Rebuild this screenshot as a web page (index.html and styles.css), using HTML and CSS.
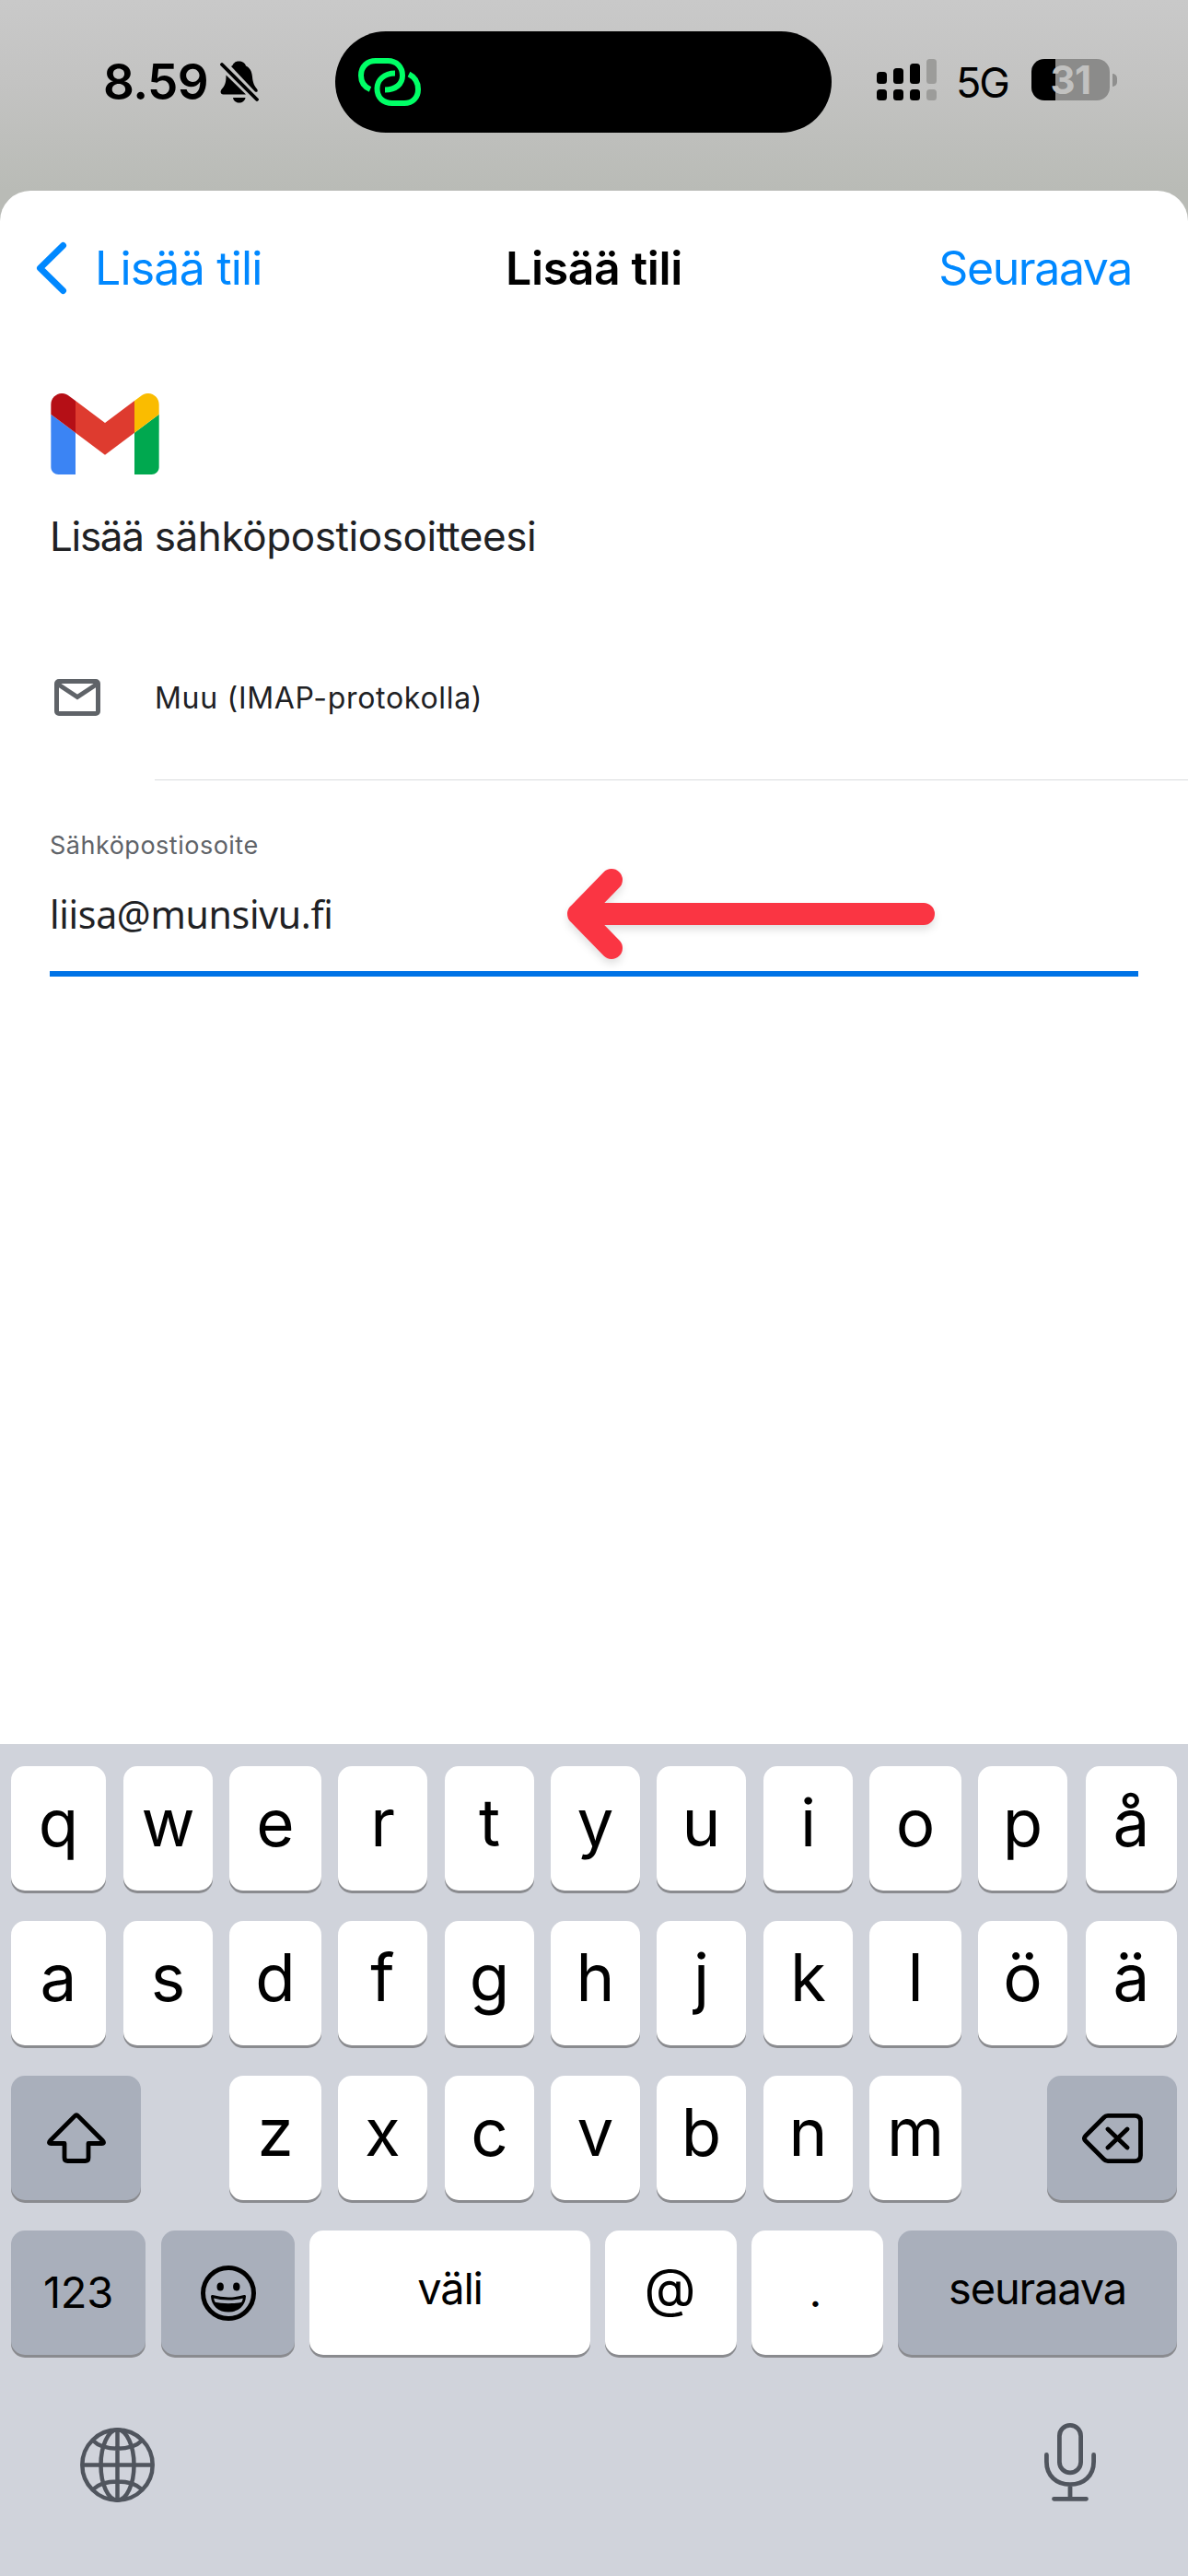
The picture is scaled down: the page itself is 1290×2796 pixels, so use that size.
FILE: index.html
```html
<!DOCTYPE html>
<html lang="fi">
<head>
<meta charset="utf-8">
<title>Lisää tili</title>
<link rel="stylesheet" href="styles.css">
</head>
<body>
<div class="screen">
  <header class="status">
    <div class="status-left">
      <span class="clock">8.59</span>
      <svg class="bell" viewBox="0 0 42 46" width="42" height="46">
        <path d="M20.500 0.500c-3.500 0-6 1.500-7 4.500l-1.500 1L38 33.500c2.500 1 3.500-.5 2-3-3-3.500-4.500-7-5-13C34.500 11 32 7.500 28 5.500 27 2 24 .5 20.500 .5z"/>
        <path d="M6.500 15.500c0 9-1.500 11.500-4.500 15-2.500 3-1.500 6 1.500 6h24.500z"/>
        <path d="M14 40h13.500c-.5 3.500-3.500 5.500-6.750 5.500S14.500 43.500 14 40z"/>
        <path d="M2 4 40 42" stroke="#000" stroke-width="3.800" stroke-linecap="round"/>
      </svg>
    </div>
    <div class="island">
      <svg class="link" viewBox="0 0 68 54" width="68" height="54" fill="none" stroke="#00ff66" stroke-width="6">
        <path d="M13 35C6 32 3 27 3 20 3 10 10 4 19 4H32C42 4 48 11 48 20 48 29 41 35.500 29 35.500"/>
        <path d="M40 17.500C28 17.500 20.500 25 20.500 34 20.500 44 27 50 37 50H50C59 50 65 44 65 35 65 27 61 21.500 55 18.500"/>
      </svg>
    </div>
    <div class="status-right">
      <svg class="signal" viewBox="0 0 65 45" width="65" height="45">
        <g><rect y="14" width="11" height="13" rx="3.500"/><rect x="18" y="10" width="11" height="17" rx="3.500"/><rect x="36" y="5" width="11" height="22" rx="3.500"/>
        <rect y="33" width="11" height="12" rx="3.500"/><rect x="18" y="33" width="11" height="12" rx="3.500"/><rect x="36" y="33" width="11" height="12" rx="3.500"/></g>
        <g fill="#9c9c9a"><rect x="54" width="11" height="27" rx="3.500"/><rect x="54" y="33" width="11" height="12" rx="3.500"/></g>
      </svg>
      <span class="network">5G</span>
      <div class="battery"><span>31</span></div>
      <i class="nub"></i>
    </div>
  </header>

  <main class="sheet">
    <nav class="nav">
      <a class="back">
        <svg viewBox="0 0 34 58" width="34" height="58" fill="none" stroke="#0088ff" stroke-width="7" stroke-linecap="round" stroke-linejoin="round"><path d="M29.500 4.500 4.500 29l25 24.500"/></svg>
        <span>Lisää tili</span>
      </a>
      <h1>Lisää tili</h1>
      <a class="next">Seuraava</a>
    </nav>
    <svg class="gmail" viewBox="52 42 88 66" width="118" height="88">
      <path fill="#3b84f4" d="M58 108h14V74L52 59v43c0 3.320 2.690 6 6 6"/>
      <path fill="#00a84f" d="M120 108h14c3.320 0 6-2.690 6-6V59l-20 15"/>
      <path fill="#fabc00" d="M120 48v26l20-15v-8c0-7.420-8.470-11.650-14.400-7.200"/>
      <path fill="#de3b2f" d="M72 74V48l24 18 24-18v26L96 92"/>
      <path fill="#b50f16" d="M52 51v8l20 15V48l-5.600-4.200c-5.940-4.450-14.400-.22-14.400 7.200"/>
    </svg>
    <h2><span class="tight">Lisää</span> sähköpostiosoi<span class="tie">t</span>teesi</h2>
    <div class="provider">
      <svg viewBox="0 0 50 40" width="50" height="40" fill="none" stroke="#5f6368" stroke-width="5"><rect x="2.500" y="2.500" width="45" height="35" rx="2.500"/><path d="M3 5l22 14.500L47 5"/></svg>
      <div class="provider-name">Muu (IMAP-protokolla)</div>
    </div>
    <div class="field">
      <label>Sähköpostiosoite</label>
      <div class="value">liisa@munsivu.fi</div>
      <svg class="arrow" viewBox="0 0 420 120" width="420" height="120" fill="none" stroke="#fa3543" stroke-width="24" stroke-linecap="round" stroke-linejoin="round"><path d="M58 23 22 60l36 37M22 60H397"/></svg>
    </div>
  </main>

  <section class="keyboard">
    <div class="row letters">
      <b>q</b><b>w</b><b>e</b><b>r</b><b>t</b><b>y</b><b>u</b><b>i</b><b>o</b><b>p</b><b>å</b>
    </div>
    <div class="row letters">
      <b>a</b><b>s</b><b>d</b><b>f</b><b>g</b><b>h</b><b>j</b><b>k</b><b>l</b><b>ö</b><b>ä</b>
    </div>
    <div class="row third">
      <b class="dark shift"><svg viewBox="0 0 64 55" width="64" height="55" fill="none" stroke="#000" stroke-width="4.800" stroke-linejoin="round"><path d="M30.300 3.600Q32 1.800 33.700 3.600L60.500 30.500Q63 33.500 59.500 33.500H45V49Q45 52.500 41.500 52.500H22.500Q19 52.500 19 49V33.500H4.500Q1 33.500 3.500 30.500Z"/></svg></b>
      <b class="z">z</b><b>x</b><b>c</b><b>v</b><b>b</b><b>n</b><b>m</b>
      <b class="dark delete"><svg viewBox="0 0 66 54" width="66" height="54" fill="none" stroke="#000" stroke-width="4.800" stroke-linecap="round" stroke-linejoin="round"><path d="M28 2.400H57Q63.500 2.400 63.500 8.500V45.500Q63.500 51.600 57 51.600H28Q25.500 51.600 23.500 49.500L4 30Q1 27 4 24L23.500 4.500Q25.500 2.400 28 2.400ZM28 17 49 37M49 17 28 37"/></svg></b>
    </div>
    <div class="row fourth">
      <b class="dark digits">123</b>
      <b class="dark emoji"><svg viewBox="0 0 60 60" width="60" height="60"><circle cx="30" cy="30" r="27.500" fill="none" stroke="#000" stroke-width="5"/><ellipse cx="21.200" cy="23" rx="3.700" ry="4.500"/><ellipse cx="38.800" cy="23" rx="3.700" ry="4.500"/><path d="M12.500 33.500Q30 38.500 47.500 33.500C47 43 40 49 30 49S13 43 12.500 33.500Z" fill="none" stroke="#000" stroke-width="3" stroke-linejoin="round"/><path d="M13.500 39.500Q30 43 46.500 39.500C43 46 37 49.500 30 49.500S17 46 13.500 39.500Z"/></svg></b>
      <b class="word">väli</b>
      <b class="at">@</b>
      <b class="dot">.</b>
      <b class="dark word">seuraava</b>
    </div>
    <div class="tray">
      <svg viewBox="0 0 81 81" width="81" height="81" fill="none" stroke="#50555e" stroke-width="4.500"><circle cx="40.500" cy="40.500" r="38.200"/><ellipse cx="40.500" cy="40.500" rx="18" ry="38.200"/><path d="M40.500 2V79M2 40.500H79M14 14C25 25.500 56 25.500 67 14M14 67C25 55.500 56 55.500 67 67"/></svg>
      <svg viewBox="0 0 56 85" width="56" height="85" fill="none" stroke="#50555e" stroke-width="4.800" stroke-linecap="round"><rect x="16.400" y="2.400" width="23.200" height="51.500" rx="11.600"/><path d="M2.400 34.500V42C2.400 57 13 66.600 28 66.600S53.600 57 53.600 42V34.500M28 67V81M10.500 82.300H45.500"/></svg>
    </div>
  </section>
</div>
</body>
</html>
```
FILE: styles.css
```css
* { box-sizing: border-box; }
body { margin: 0; font-family: Inter, "Liberation Sans", sans-serif; color: #000; }
svg { display: block; flex: none; }
h1, h2, b { margin: 0; font-weight: 400; }

.screen {
  width: 1290px;
  height: 2796px;
  display: flex;
  flex-direction: column;
  background: linear-gradient(#c9c9c9, #c3c3c2 90px, #b9bbb6 207px, #b9bbb6 260px);
  overflow: hidden;
}

/* status bar */
.status { height: 207px; flex: none; display: grid; grid-template-columns: 364px 539px 1fr; }
.status-left { display: flex; align-items: flex-start; padding: 66px 0 0 112px; }
.clock { width: 127px; padding-top: 1px; font-size: 53px; line-height: 44px; font-weight: 600; letter-spacing: -0.6px; white-space: nowrap; }
.island { height: 110px; margin-top: 34px; border-radius: 55px; background: #000; padding: 28px 0 0 25px; }
.status-right { display: flex; align-items: flex-start; padding: 64px 0 0 49px; }
.network { width: 64px; margin: 3px 0 0 21px; font-size: 45px; line-height: 45px; letter-spacing: -2px; }
.battery { width: 85px; height: 45px; margin-left: 18px; border-radius: 14px; background: linear-gradient(90deg, #000 26px, #8b8b8a 26px); color: #c1c1c0; font-size: 42px; line-height: 46px; font-weight: 700; text-align: center; letter-spacing: -0.5px; }
.nub { width: 5px; height: 14px; margin: 16px 0 0 3px; border-radius: 0 5px 5px 0; background: #8f8f8e; }

/* sheet */
.sheet { height: 1686px; flex: none; background: #fff; border-radius: 33px 33px 0 0; }
.nav { height: 168px; display: grid; grid-template-columns: 1fr auto 1fr; align-items: center; font-size: 50px; line-height: 60px; }
.nav h1 { font-size: 50px; font-weight: 600; letter-spacing: -0.4px; }
.back, .next { color: #0088ff; }
.back { display: flex; align-items: center; gap: 30px; padding-left: 39px; letter-spacing: -0.8px; }
.next { text-align: right; letter-spacing: -1.4px; padding-right: 61px; }
.gmail { margin: 52px 0 0 55px; }
h2 { margin: 39px 0 0 54px; font-size: 44px; line-height: 56px; color: #202124; letter-spacing: -0.4px; }
.tight { letter-spacing: -1.3px; }
.tie { letter-spacing: -3px; }
.provider { display: flex; align-items: flex-start; gap: 59px; margin-top: 61px; padding-left: 59px; height: 176px; }
.provider svg { margin-top: 66px; }
.provider-name { flex: 1; height: 176px; line-height: 173px; font-size: 32px; color: #202124; letter-spacing: 0.7px; border-bottom: 1px solid #dadcde; }
.field { position: relative; height: 213px; margin: 0 54px; border-bottom: 6px solid #0073e6; padding-top: 52px; }
label { display: block; font-size: 27px; line-height: 38px; letter-spacing: 0.5px; color: #5f6368; }
.value { margin-top: 27px; font: 41px/56px "Noto Sans", sans-serif; letter-spacing: -0.3px; color: #202124; }
.arrow { position: absolute; left: 552px; top: 85px; filter: drop-shadow(0 5px 4px rgba(0, 0, 0, .12)); }

/* keyboard */
.keyboard { flex: 1; background: #d0d3db; padding: 24px 12px 0; }
.row { display: grid; height: 135px; margin-bottom: 33px; column-gap: 18px; }
.row b { display: flex; justify-content: center; border-radius: 15px; background: #fff; box-shadow: 0 3px 0 #8a8b8f; font-size: 71px; line-height: 122px; font-weight: 400; }
.row .dark { background: #a9afbb; align-items: center; }
.letters { grid-template-columns: 104px 97px 100px 98px 97px 97px 98px 97px 100px 99px 99px; }
.letters b:nth-child(3n+1) { margin-right: 1px; }
.letters b:nth-child(10) { margin-right: 2px; }
.third { grid-template-columns: 141px 60px 100px 98px 97px 97px 98px 97px 100px 57px 141px; }
.third b:nth-child(3), .third b:nth-child(6) { margin-right: 1px; }
.third .z { grid-column: 3; }
.third .delete { grid-column: 11; }
.fourth { grid-template-columns: 146px 146px 305px 143px 143px 303px; column-gap: 16px; }
.fourth .emoji { margin-left: 1px; }
.row .digits, .row .word { font-size: 47px; align-items: flex-start; }
.row .digits { line-height: 134px; letter-spacing: -0.3px; }
.row .word { line-height: 126px; letter-spacing: -1.2px; }
.row .at { font-size: 58px; line-height: 124px; padding-right: 2px; }
.row .dot { font-size: 48px; line-height: 132px; padding-right: 4px; }
.tray { display: flex; justify-content: space-between; padding: 41px 88px 0 75px; }
.tray svg:first-child { margin-top: 5px; }
```
